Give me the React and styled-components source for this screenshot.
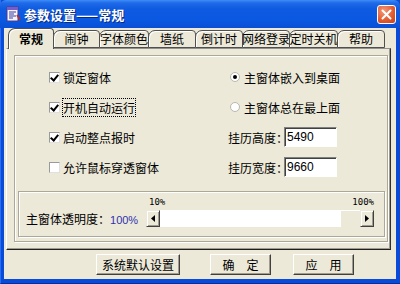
import React from "react";
import styled, { createGlobalStyle } from "styled-components";

const GlobalStyle = createGlobalStyle`
  html, body {
    margin: 0;
    padding: 0;
    background: #ffffff;
  }
  body {
    font-family: "Noto Sans CJK SC", "Liberation Sans", sans-serif;
    font-size: 12px;
  }
`;

const tabs = [
  { label: "常规", width: 46 },
  { label: "闹钟", width: 47 },
  { label: "字体颜色", width: 50 },
  { label: "墙纸", width: 48 },
  { label: "倒计时", width: 48 },
  { label: "网络登录", width: 48 },
  { label: "定时关机", width: 49 },
  { label: "帮助", width: 48 },
];

const App = () => {
  return (
    <>
      <GlobalStyle />
      <Window>
        <TitleBar>
          <TitleIcon width="16" height="16" viewBox="0 0 16 16">
            <rect x="2" y="1" width="11" height="14" fill="#f4f4ff" stroke="#4a3c8c" />
            <rect x="2" y="1" width="11" height="3" fill="#7a5cc8" />
            <path d="M4 6h7M4 8h5M4 10h7M4 12h4" stroke="#3a3a9a" strokeWidth="1" />
            <path d="M12 9l3 5" stroke="#c03020" strokeWidth="1.5" />
          </TitleIcon>
          <TitleText>参数设置——常规</TitleText>
          <CloseButton>
            <svg width="11" height="11" viewBox="0 0 11 11">
              <path d="M1.5 1.5l8 8M9.5 1.5l-8 8" stroke="#fff" strokeWidth="2" strokeLinecap="round" />
            </svg>
          </CloseButton>
        </TitleBar>
        <Client>
          <TabStrip>
            {tabs.map((tab, index) => (
              <Tab
                key={`tab-${index}`}
                $w={tab.width}
                $active={index === 0}
              >
                {tab.label}
              </Tab>
            ))}
          </TabStrip>
          <Panel>
            <GroupBox>
              <OptionGrid>
                <Option>
                  <CheckBox $checked />
                  <span>锁定窗体</span>
                </Option>
                <Option>
                  <Radio $checked />
                  <span>主窗体嵌入到桌面</span>
                </Option>
                <Option>
                  <CheckBox $checked />
                  <FocusText>开机自动运行</FocusText>
                </Option>
                <Option>
                  <Radio />
                  <span>主窗体总在最上面</span>
                </Option>
                <Option>
                  <CheckBox $checked />
                  <span>启动整点报时</span>
                </Option>
                <Option>
                  <FieldLabel>挂历高度：</FieldLabel>
                  <TextInput>5490</TextInput>
                </Option>
                <Option>
                  <CheckBox />
                  <span>允许鼠标穿透窗体</span>
                </Option>
                <Option>
                  <FieldLabel>挂历宽度：</FieldLabel>
                  <TextInput>9660</TextInput>
                </Option>
              </OptionGrid>
              <SliderBox>
                <SliderLabel>
                  主窗体透明度：<SliderValue>100%</SliderValue>
                </SliderLabel>
                <SliderBlock>
                  <TickRow>
                    <span>10%</span>
                    <span>100%</span>
                  </TickRow>
                  <ScrollBar>
                    <ArrowButton>
                      <svg width="4" height="7" viewBox="0 0 4 7">
                        <path d="M4 0v7L0 3.5z" fill="#000" />
                      </svg>
                    </ArrowButton>
                    <Track />
                    <Thumb />
                    <ArrowButton>
                      <svg width="4" height="7" viewBox="0 0 4 7">
                        <path d="M0 0v7l4-3.5z" fill="#000" />
                      </svg>
                    </ArrowButton>
                  </ScrollBar>
                </SliderBlock>
              </SliderBox>
            </GroupBox>
          </Panel>
          <ButtonRow>
            <Button $w={84}>系统默认设置</Button>
            <Button $w={61} $ml={30}>确　定</Button>
            <Button $w={61} $ml={22}>应　用</Button>
          </ButtonRow>
        </Client>
      </Window>
    </>
  );
};

export default App;

const Window = styled.div`
  width: 400px;
  height: 284px;
  box-sizing: border-box;
  display: flex;
  flex-direction: column;
  background: #0a4ad8;
  padding: 0 4px 4px 3px;
  border-left: 1px solid #2a6ef0;
  border-bottom: 1px solid #0030a0;
`;

const TitleBar = styled.div`
  height: 28px;
  margin: 0 -4px 0 -4px;
  padding: 0 4px 0 4px;
  display: flex;
  align-items: center;
  background: linear-gradient(
    180deg,
    #3d8cf6 0px,
    #1f6ae8 3px,
    #0f5be0 9px,
    #0b58e2 20px,
    #0a4fd4 28px
  );
  border-radius: 6px 6px 0 0;
`;

const TitleIcon = styled.svg`
  margin-left: 1px;
  flex: none;
`;

const TitleText = styled.div`
  margin-left: 3px;
  flex: 1;
  color: #ffffff;
  font-weight: bold;
  font-size: 13px;
  text-shadow: 1px 1px 0 #0a2a80;
`;

const CloseButton = styled.div`
  width: 19px;
  height: 19px;
  box-sizing: border-box;
  border: 1px solid #ffffff;
  border-radius: 3px;
  background: radial-gradient(circle at 35% 30%, #f29a78, #e0582e 60%, #c8401c);
  display: flex;
  align-items: center;
  justify-content: center;
`;

const Client = styled.div`
  flex: 1;
  display: flex;
  flex-direction: column;
  background: #ece9d8;
  padding: 0 5px 0 2px;
`;

const TabStrip = styled.div`
  display: flex;
  align-items: flex-end;
  height: 20px;
  padding-left: 2px;
  position: relative;
  z-index: 1;
`;

const Tab = styled.div`
  width: ${({ $w }) => $w}px;
  flex: none;
  box-sizing: border-box;
  height: ${({ $active }) => ($active ? 21 : 18)}px;
  margin-bottom: ${({ $active }) => ($active ? -1 : 0)}px;
  margin-left: ${({ $active }) => ($active ? 0 : -1)}px;
  border: 1px solid #505050;
  border-bottom: ${({ $active }) => ($active ? "none" : "1px solid #505050")};
  border-radius: 7px 4px 0 0;
  background: #ece9d8;
  box-shadow: inset 1px 1px 0 #ffffff;
  display: flex;
  align-items: center;
  justify-content: center;
  white-space: nowrap;
  overflow: visible;
  font-weight: ${({ $active }) => ($active ? "bold" : "normal")};
  color: #000;
  line-height: 1;
`;

const Panel = styled.div`
  height: 202px;
  box-sizing: border-box;
  border: 1px solid;
  border-color: #909090 #303030 #202020 #ffffff;
  box-shadow: inset -1px -1px 0 #a09c90;
  padding: 6px 2px 7px 7px;
`;

const GroupBox = styled.div`
  height: 100%;
  box-sizing: border-box;
  border: 1px solid #aca899;
  box-shadow: inset 1px 1px 0 #ffffff, 1px 1px 0 #ffffff;
  padding: 6px 2px 4px 3px;
  display: flex;
  flex-direction: column;
`;

const OptionGrid = styled.div`
  display: grid;
  grid-template-columns: 179px 1fr;
  grid-auto-rows: 30px;
  padding-left: 31px;
`;

const Option = styled.div`
  display: flex;
  align-items: center;
  color: #000;
  white-space: nowrap;
`;

const CheckBox = styled.span`
  width: 11px;
  height: 11px;
  box-sizing: border-box;
  flex: none;
  margin-right: 3px;
  background: #ffffff;
  border: 1px solid;
  border-color: #9a9a9a #e0e0e0 #e0e0e0 #9a9a9a;
  position: relative;
  &::after {
    content: "";
    display: ${({ $checked }) => ($checked ? "block" : "none")};
    position: absolute;
    left: 2px;
    top: 0px;
    width: 3px;
    height: 6px;
    border: solid #000;
    border-width: 0 2px 2px 0;
    transform: rotate(40deg);
  }
`;

const Radio = styled.span`
  width: 10px;
  height: 10px;
  box-sizing: border-box;
  flex: none;
  margin: 0 4px 0 2px;
  border-radius: 50%;
  background: #ffffff;
  border: 1px solid #b8b8b0;
  position: relative;
  &::after {
    content: "";
    display: ${({ $checked }) => ($checked ? "block" : "none")};
    position: absolute;
    left: 2px;
    top: 2px;
    width: 4px;
    height: 4px;
    border-radius: 50%;
    background: #000;
  }
`;

const FocusText = styled.span`
  outline: 1px dotted #000;
  outline-offset: 0px;
`;

const FieldLabel = styled.span`
  width: 56px;
  flex: none;
  overflow: visible;
`;

const TextInput = styled.div`
  width: 53px;
  height: 20px;
  box-sizing: border-box;
  background: #ffffff;
  border: 1px solid;
  border-color: #808080 #ffffff #ffffff #808080;
  box-shadow: inset 1px 1px 0 #404040;
  padding-left: 2px;
  display: flex;
  align-items: center;
  font-family: "Liberation Sans", sans-serif;
  font-size: 12px;
  color: #000;
`;

const SliderBox = styled.div`
  margin-top: 9px;
  flex: 1;
  border: 1px solid #aca899;
  box-shadow: inset 1px 1px 0 #ffffff, 1px 1px 0 #ffffff;
  padding: 4px 10px 9px 7px;
  display: flex;
  align-items: flex-end;
`;

const SliderLabel = styled.div`
  width: 120px;
  flex: none;
  height: 17px;
  line-height: 17px;
  white-space: nowrap;
  color: #000;
`;

const SliderValue = styled.span`
  color: #3030b0;
  font-family: "Liberation Sans", sans-serif;
  font-size: 11px;
`;

const SliderBlock = styled.div`
  flex: 1;
  display: flex;
  flex-direction: column;
`;

const TickRow = styled.div`
  display: flex;
  justify-content: space-between;
  padding: 0 0 2px 3px;
  font-family: "DejaVu Sans Mono", monospace;
  font-size: 9px;
  line-height: 11px;
  color: #000;
`;

const ScrollBar = styled.div`
  height: 17px;
  display: flex;
  background: #ffffff;
`;

const ArrowButton = styled.div`
  width: 14px;
  flex: none;
  box-sizing: border-box;
  background: #ece9d8;
  border: 1px solid;
  border-color: #ece9d8 #404040 #404040 #ece9d8;
  box-shadow: inset 1px 1px 0 #ffffff, inset -1px -1px 0 #a09c90;
  display: flex;
  align-items: center;
  justify-content: center;
`;

const Track = styled.div`
  flex: 1;
  background: #ffffff;
`;

const Thumb = styled.div`
  width: 20px;
  flex: none;
  background: #ece9d8;
  box-shadow: inset 1px 1px 0 #ffffff;
`;

const ButtonRow = styled.div`
  display: flex;
  margin-top: 4px;
  height: 21px;
  padding-left: 90px;
`;

const Button = styled.div`
  width: ${({ $w }) => $w}px;
  margin-left: ${({ $ml }) => $ml || 0}px;
  box-sizing: border-box;
  height: 21px;
  background: #ece9d8;
  border: 1px solid;
  border-color: #ffffff #404040 #404040 #ffffff;
  box-shadow: inset -1px -1px 0 #a09c90;
  display: flex;
  align-items: center;
  justify-content: center;
  color: #000;
  white-space: nowrap;
`;
